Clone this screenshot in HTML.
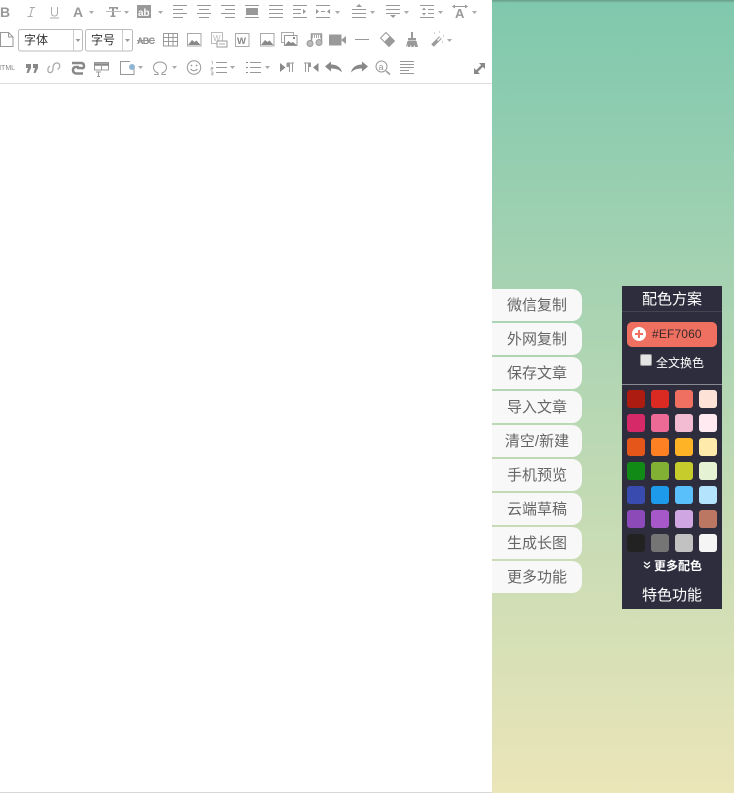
<!DOCTYPE html>
<html lang="zh"><head><meta charset="utf-8">
<style>
html,body{margin:0;padding:0;width:734px;height:793px;overflow:hidden;background:#fff;font-family:"Liberation Sans","Noto Sans CJK SC",sans-serif}
#ed{position:absolute;left:0;top:0;width:492px;height:793px;background:#fff;border-bottom:0}
#ln{position:absolute;left:0;top:83px;width:492px;height:1px;background:#ddd}
#bl{position:absolute;left:0;top:792px;width:492px;height:1px;background:#d8d8d8}
#bg{position:absolute;left:492px;top:0;width:242px;height:793px;background:linear-gradient(#7fc8ae,#ebe5b8)}
#sh{position:absolute;left:492px;top:0;width:242px;height:3px;background:linear-gradient(rgba(70,90,80,.4),rgba(70,90,80,0))}
.b{position:absolute;left:492px;width:90px;height:32px;background:#f8f8f8;border-radius:0 10px 10px 0;color:#666;font-size:15px;line-height:34px;text-align:center}
#p{position:absolute;left:622px;top:286px;width:100px;height:323px;background:#2d2d3d;color:#fff}
#p div{position:absolute}
.s{width:18px;height:18px;border-radius:3px}
svg{position:absolute;left:0;top:0}
#tb{filter:blur(.35px)}
</style></head><body>
<div id="ed"></div><div id="ln"></div><div id="bl"></div>
<div id="bg"></div><div id="sh"></div>
<svg id="tb" width="492" height="83" viewBox="0 0 492 83" fill="none" stroke="#999" stroke-width="1">
<!-- row 1 -->
<text x="0" y="17" font-family="Liberation Sans" font-weight="700" font-size="14" fill="#999" stroke="none">B</text>
<path d="M30 7.500h5M27.500 16.500h5M32.500 7.500l-2.500 9" stroke="#aaa"/>
<path d="M51.500 7v6q0 3 3 3t3-3V7M50 18h9" stroke="#aaa"/>
<text x="73" y="17" font-family="Liberation Sans" font-weight="700" font-size="14" fill="#999" stroke="none">A</text>
<path d="M89 11h5l-2.500 3z" fill="#aaa" stroke="none"/>
<path d="M109 7h9v2.500h-1.500l-.5-1h-2v7h1.500v1.500h-5v-1.500h1.500v-7h-2l-.5 1H109z" fill="#999" stroke="none"/>
<path d="M106 11.500h15" stroke="#bbb"/>
<path d="M124 11h5l-2.500 3z" fill="#aaa" stroke="none"/>
<rect x="137" y="5" width="14" height="13" fill="#999" stroke="none"/>
<text x="138" y="16" font-family="Liberation Sans" font-weight="700" font-size="10" fill="#fff" stroke="none">ab</text>
<path d="M158 11h5l-2.500 3z" fill="#aaa" stroke="none"/>
<path d="M173 5.500h14M173 9.500h10M173 13.500h14M173 17.500h10"/>
<path d="M197 5.500h14M199 9.500h10M197 13.500h14M199 17.500h10"/>
<path d="M221 5.500h14M225 9.500h10M221 13.500h14M225 17.500h10"/>
<path d="M245 5.500h14M245 17.500h14"/><rect x="246" y="8" width="12" height="7" fill="#999" stroke="none"/>
<path d="M269 5.500h14M269 9.500h14M269 13.500h14M269 17.500h14"/>
<path d="M293 5.500h14M293 9.500h8M293 13.500h8M293 17.500h14"/><path d="M303 9l3 2.500-3 2.500z" fill="#999" stroke="none"/>
<path d="M316 5.500h14M316 17.500h14M321 11.500h4"/><path d="M316 9l3 2.500-3 2.500zM330 9l-3 2.500 3 2.500z" fill="#999" stroke="none"/>
<path d="M335 11h5l-2.500 3z" fill="#aaa" stroke="none"/>
<path d="M352 9.500h14M352 13.500h14M352 17.500h14"/><path d="M356 7l3-3 3 3z" fill="#999" stroke="none"/>
<path d="M370 11h5l-2.500 3z" fill="#aaa" stroke="none"/>
<path d="M386 5.500h14M386 9.500h14M386 13.500h14"/><path d="M390 15l3 3 3-3z" fill="#999" stroke="none"/>
<path d="M404 11h5l-2.500 3z" fill="#aaa" stroke="none"/>
<path d="M420 5.500h14M428 9.500h6M428 13.500h6M420 17.500h14"/><path d="M422 10l2-2.500 2 2.500zM422 13l2 2.500 2-2.500z" fill="#999" stroke="none"/>
<path d="M438 11h5l-2.500 3z" fill="#aaa" stroke="none"/>
<path d="M454 6.500h12"/><path d="M452 6.500l3-2v4zM468 6.500l-3-2v4z" fill="#999" stroke="none"/>
<text x="455" y="18" font-family="Liberation Sans" font-weight="700" font-size="13" fill="#999" stroke="none">A</text>
<path d="M472 11h5l-2.500 3z" fill="#aaa" stroke="none"/>
<!-- row 2 -->
<path d="M.5 32.500h8l4.500 4.500v9.500H.5zM8.500 32.500V37H13"/>
<text x="137" y="44" font-family="Liberation Sans" font-weight="700" font-size="9" fill="#888" stroke="none" textLength="18">ABC</text>
<path d="M137 40.500h18" stroke="#999"/>
<rect x="163.500" y="33.500" width="14" height="12.500"/><path d="M163.500 37.500h14M163.500 41.500h14M168.500 34v12M173 34v12"/>
<rect x="187.500" y="33.500" width="13.500" height="12.500" stroke="#aaa"/><path d="M188 45l4-5 2.500 2 2-1.500 4 4.500z" fill="#888" stroke="none"/>
<rect x="211.500" y="32.500" width="11" height="11" stroke="#bbb"/><text x="213" y="41" font-family="Liberation Sans" font-size="8" fill="#bbb" stroke="none">W</text>
<rect x="217" y="41" width="10" height="6" fill="#fff" stroke="#999"/><path d="M219 44h6" stroke="#aaa"/>
<rect x="235.500" y="33.500" width="13.500" height="13" stroke="#aaa"/><text x="237" y="44" font-family="Liberation Sans" font-weight="700" font-size="9.500" fill="#888" stroke="none">W</text>
<rect x="260.500" y="33.500" width="13.500" height="12.500" stroke="#aaa"/><path d="M261 45l4-5 2.500 2 2-1.500 4 4.500z" fill="#888" stroke="none"/>
<rect x="281.500" y="32.500" width="12" height="10" stroke="#aaa"/>
<rect x="284.500" y="35.500" width="12.500" height="10" fill="#fff" stroke="#999"/><path d="M285 45l3.500-4 2.500 2 2-1 3.500 3z" fill="#888" stroke="none"/><rect x="293" y="37" width="2" height="2" fill="#888" stroke="none"/>
<path d="M311.500 43V34h10v8" stroke="#999" stroke-width="1.500"/><path d="M312 36.500h9" stroke="#aaa" stroke-width="3" stroke-dasharray="1 1"/>
<circle cx="310" cy="43.500" r="3" fill="#bbb" stroke="#999"/><circle cx="319" cy="42.500" r="3" fill="#bbb" stroke="#999"/>
<rect x="329" y="34.500" width="12.500" height="11" fill="#999" stroke="none"/><path d="M341 40l5-4v8z" fill="#999" stroke="none"/>
<path d="M355 39.500h14"/>
<path d="M386 32.500l8.500 8.500-5.500 5.500-8.500-8.500z" fill="#fff" stroke="#999"/><path d="M389.500 36.500l5 4.500-5.500 5.500-5-4.500z" fill="#999" stroke="none"/>
<path d="M411 32h2v6h-2zM408 38h8v2.500h-8zM407.500 41h9l1.500 6h-3l-.5-2-1 2h-2l-.5-2-1 2h-2l-.5-2-1 2H406z" fill="#999" stroke="none"/>
<path d="M432.500 45.500l8-8" stroke="#999" stroke-width="3.500"/><path d="M437.500 40.500l3-3" stroke="#fff" stroke-width="1.500"/>
<path d="M434 33h1M439 32h1M443 36h1M442 42h1" stroke="#aaa"/>
<path d="M447 39h5l-2.500 3z" fill="#aaa" stroke="none"/>
<!-- row 3 -->
<text x="-4" y="70" font-family="Liberation Sans" font-size="7" fill="#888" stroke="none">HTML</text>
<path d="M26 64h5v4l-2.500 5h-2l1.500-5h-2zM33 64h5v4l-2.500 5h-2l1.500-5h-2z" fill="#888" stroke="none"/>
<path d="M50 66c-3 2-2.500 6-.5 6.500s3.500-1 3.500-4 1-5.500 4-5.500 4 4 .5 6.500" stroke="#aaa" stroke-width="1.300"/>
<path d="M72 63h9q3 0 3 3t-3 2h-4M79 67h-3q-3 0-3 3t3 3.500h7" stroke="#888" stroke-width="2.500"/>
<rect x="94.500" y="62.500" width="14" height="7.500" stroke="#999"/><path d="M94 64.500h15" stroke="#888" stroke-width="2.500"/><path d="M101.500 63v7" stroke="#999"/>
<path d="M96 72h5M98.500 72v4M97 76.500h3" stroke="#999"/>
<path d="M130 61.500h-9.500v13H134V66" stroke="#999"/><circle cx="132" cy="67" r="3" fill="#8fb5d2" stroke="none"/>
<path d="M138 66h5l-2.500 3z" fill="#aaa" stroke="none"/>
<path d="M154 74.500h4V73c-3-1-4.500-3-4.500-5.500 0-3.500 3-5.500 6.500-5.500s6.500 2 6.500 5.500c0 2.500-1.500 4.500-4.500 5.500v1.500h4" stroke="#999"/>
<path d="M172 66h5l-2.500 3z" fill="#aaa" stroke="none"/>
<circle cx="194" cy="67.500" r="6.700" stroke="#999"/><circle cx="191.500" cy="65.500" r=".9" fill="#999" stroke="none"/><circle cx="196.500" cy="65.500" r=".9" fill="#999" stroke="none"/><path d="M190.500 69q3.500 3.500 7 0" stroke="#999"/>
<path d="M211.500 61.500h1v3M211 67.500h2v1h-2v1.500h2M211 72h2v3h-2M211 73.500h2" stroke="#aaa" stroke-width=".7"/>
<path d="M216 62.500h11M216 67.500h11M216 72.500h11"/>
<path d="M230 66h5l-2.500 3z" fill="#aaa" stroke="none"/>
<path d="M246 62.500h2M246 67.500h2M246 72.500h2" stroke="#888"/><path d="M250 62.500h11M250 67.500h11M250 72.500h11"/>
<path d="M265 66h5l-2.500 3z" fill="#aaa" stroke="none"/>
<path d="M280 63l5.500 4.500-5.500 4.500z" fill="#888" stroke="none"/><path d="M287 63h7M289.500 63v9M292.500 63v9" stroke="#999"/><rect x="286.500" y="63" width="3" height="4" fill="#999" stroke="none"/>
<path d="M304 63h7M305.500 63v9M308.500 63v9" stroke="#999"/><rect x="308" y="63" width="3" height="4" fill="#999" stroke="none"/><path d="M318.500 63l-5.500 4.500 5.500 4.500z" fill="#888" stroke="none"/>
<path d="M325 66.500l6-5v3c6 0 10 3 11 8-3-3-6-4-11-4v3z" fill="#888" stroke="none"/>
<path d="M368 66.500l-6-5v3c-6 0-10 3-11 8 3-3 6-4 11-4v3z" fill="#888" stroke="none"/>
<circle cx="381.500" cy="66.500" r="5.500" stroke="#999"/>
<text x="378.500" y="70" font-family="Liberation Sans" font-size="9" fill="#999" stroke="none">a</text>
<path d="M386 71l4 3.500" stroke="#999" stroke-width="1.500"/>
<path d="M400 61.500h14M400 64.500h14M400 67.500h14M400 70.500h9M400 73.500h14" stroke="#999"/>
<path d="M476.500 71.500l7-7" stroke="#888" stroke-width="2.500"/>
<path d="M479 63h6v6zM474 68v6h6z" fill="#888" stroke="none"/>
</svg>
<svg width="140" height="60" viewBox="0 0 140 60" fill="none">
<rect x="18.500" y="29.500" width="64" height="21.500" rx="2" stroke="#bbb" fill="#fff"/><path d="M73.500 30v21" stroke="#ccc"/>
<path d="M75.500 39h5l-2.500 3z" fill="#999"/>
<rect x="85.500" y="29.500" width="47" height="21.500" rx="2" stroke="#bbb" fill="#fff"/><path d="M122.500 30v21" stroke="#ccc"/>
<path d="M125 39h5l-2.500 3z" fill="#999"/>
<text x="24" y="44" font-family="Liberation Sans,Noto Sans CJK SC,sans-serif" font-size="12" fill="#333">字体</text>
<text x="91" y="44" font-family="Liberation Sans,Noto Sans CJK SC,sans-serif" font-size="12" fill="#333">字号</text>
</svg>

<div class="b" style="top:289px">微信复制</div>
<div class="b" style="top:323px">外网复制</div>
<div class="b" style="top:357px">保存文章</div>
<div class="b" style="top:391px">导入文章</div>
<div class="b" style="top:425px">清空/新建</div>
<div class="b" style="top:459px">手机预览</div>
<div class="b" style="top:493px">云端草稿</div>
<div class="b" style="top:527px">生成长图</div>
<div class="b" style="top:561px">更多功能</div>

<div id="p">
<div style="left:0;top:4px;width:100px;text-align:center;font-size:15px;line-height:20px">配色方案</div>
<div style="left:0;top:25px;width:100px;height:1px;background:#444452"></div>
<div style="left:5px;top:36px;width:90px;height:25px;background:#ef7060;border-radius:5px"></div>
<div style="left:10px;top:41px;width:14px;height:14px;border-radius:50%;background:#fff"></div>
<div style="left:13px;top:47px;width:8px;height:2px;background:#ef7060"></div>
<div style="left:16px;top:44px;width:2px;height:8px;background:#ef7060"></div>
<div style="left:30px;top:41px;font-size:12px;line-height:15px;letter-spacing:.15px;white-space:nowrap;color:#3a2a2a">#EF7060</div>
<div style="left:18px;top:68px;width:10px;height:10px;background:#e4e4e4;border-radius:2px;border:1px solid #999"></div>
<div style="left:34px;top:68px;font-size:12px;line-height:18px;white-space:nowrap">全文换色</div>
<div style="left:0;top:98px;width:100px;height:1px;background:#8a8a92"></div>
<div class="s" style="left:5px;top:104px;background:#ad1c10"></div><div class="s" style="left:29px;top:104px;background:#db2a22"></div><div class="s" style="left:53px;top:104px;background:#ef7060"></div><div class="s" style="left:77px;top:104px;background:#fde2d8"></div>
<div class="s" style="left:5px;top:128px;background:#d62a68"></div><div class="s" style="left:29px;top:128px;background:#ee6a96"></div><div class="s" style="left:53px;top:128px;background:#f4bcd2"></div><div class="s" style="left:77px;top:128px;background:#feeaf0"></div>
<div class="s" style="left:5px;top:152px;background:#e5561a"></div><div class="s" style="left:29px;top:152px;background:#fd8023"></div><div class="s" style="left:53px;top:152px;background:#feb327"></div><div class="s" style="left:77px;top:152px;background:#feeaaa"></div>
<div class="s" style="left:5px;top:176px;background:#118b16"></div><div class="s" style="left:29px;top:176px;background:#82b035"></div><div class="s" style="left:53px;top:176px;background:#c6cc2c"></div><div class="s" style="left:77px;top:176px;background:#e6f2d4"></div>
<div class="s" style="left:5px;top:200px;background:#3a4bb0"></div><div class="s" style="left:29px;top:200px;background:#1d9bea"></div><div class="s" style="left:53px;top:200px;background:#5ac0fb"></div><div class="s" style="left:77px;top:200px;background:#b3e3fd"></div>
<div class="s" style="left:5px;top:224px;background:#8c4ab8"></div><div class="s" style="left:29px;top:224px;background:#a658c8"></div><div class="s" style="left:53px;top:224px;background:#cfa5e2"></div><div class="s" style="left:77px;top:224px;background:#bc7763"></div>
<div class="s" style="left:5px;top:248px;background:#222"></div><div class="s" style="left:29px;top:248px;background:#757575"></div><div class="s" style="left:53px;top:248px;background:#c2c2c2"></div><div class="s" style="left:77px;top:248px;background:#f5f5f5"></div>
<div style="left:21px;top:273px;width:8px;height:12px">
<svg width="8" height="12" fill="none" stroke="#fff" stroke-width="1.200"><path d="M1 3l3 2.500L7 3M1 6.500l3 2.500 3-2.500"/></svg></div>
<div style="left:32px;top:271px;font-size:12px;font-weight:700;line-height:18px;white-space:nowrap">更多配色</div>
<div style="left:0;top:300px;width:100px;text-align:center;font-size:15px;line-height:20px">特色功能</div>
</div>
</body></html>
